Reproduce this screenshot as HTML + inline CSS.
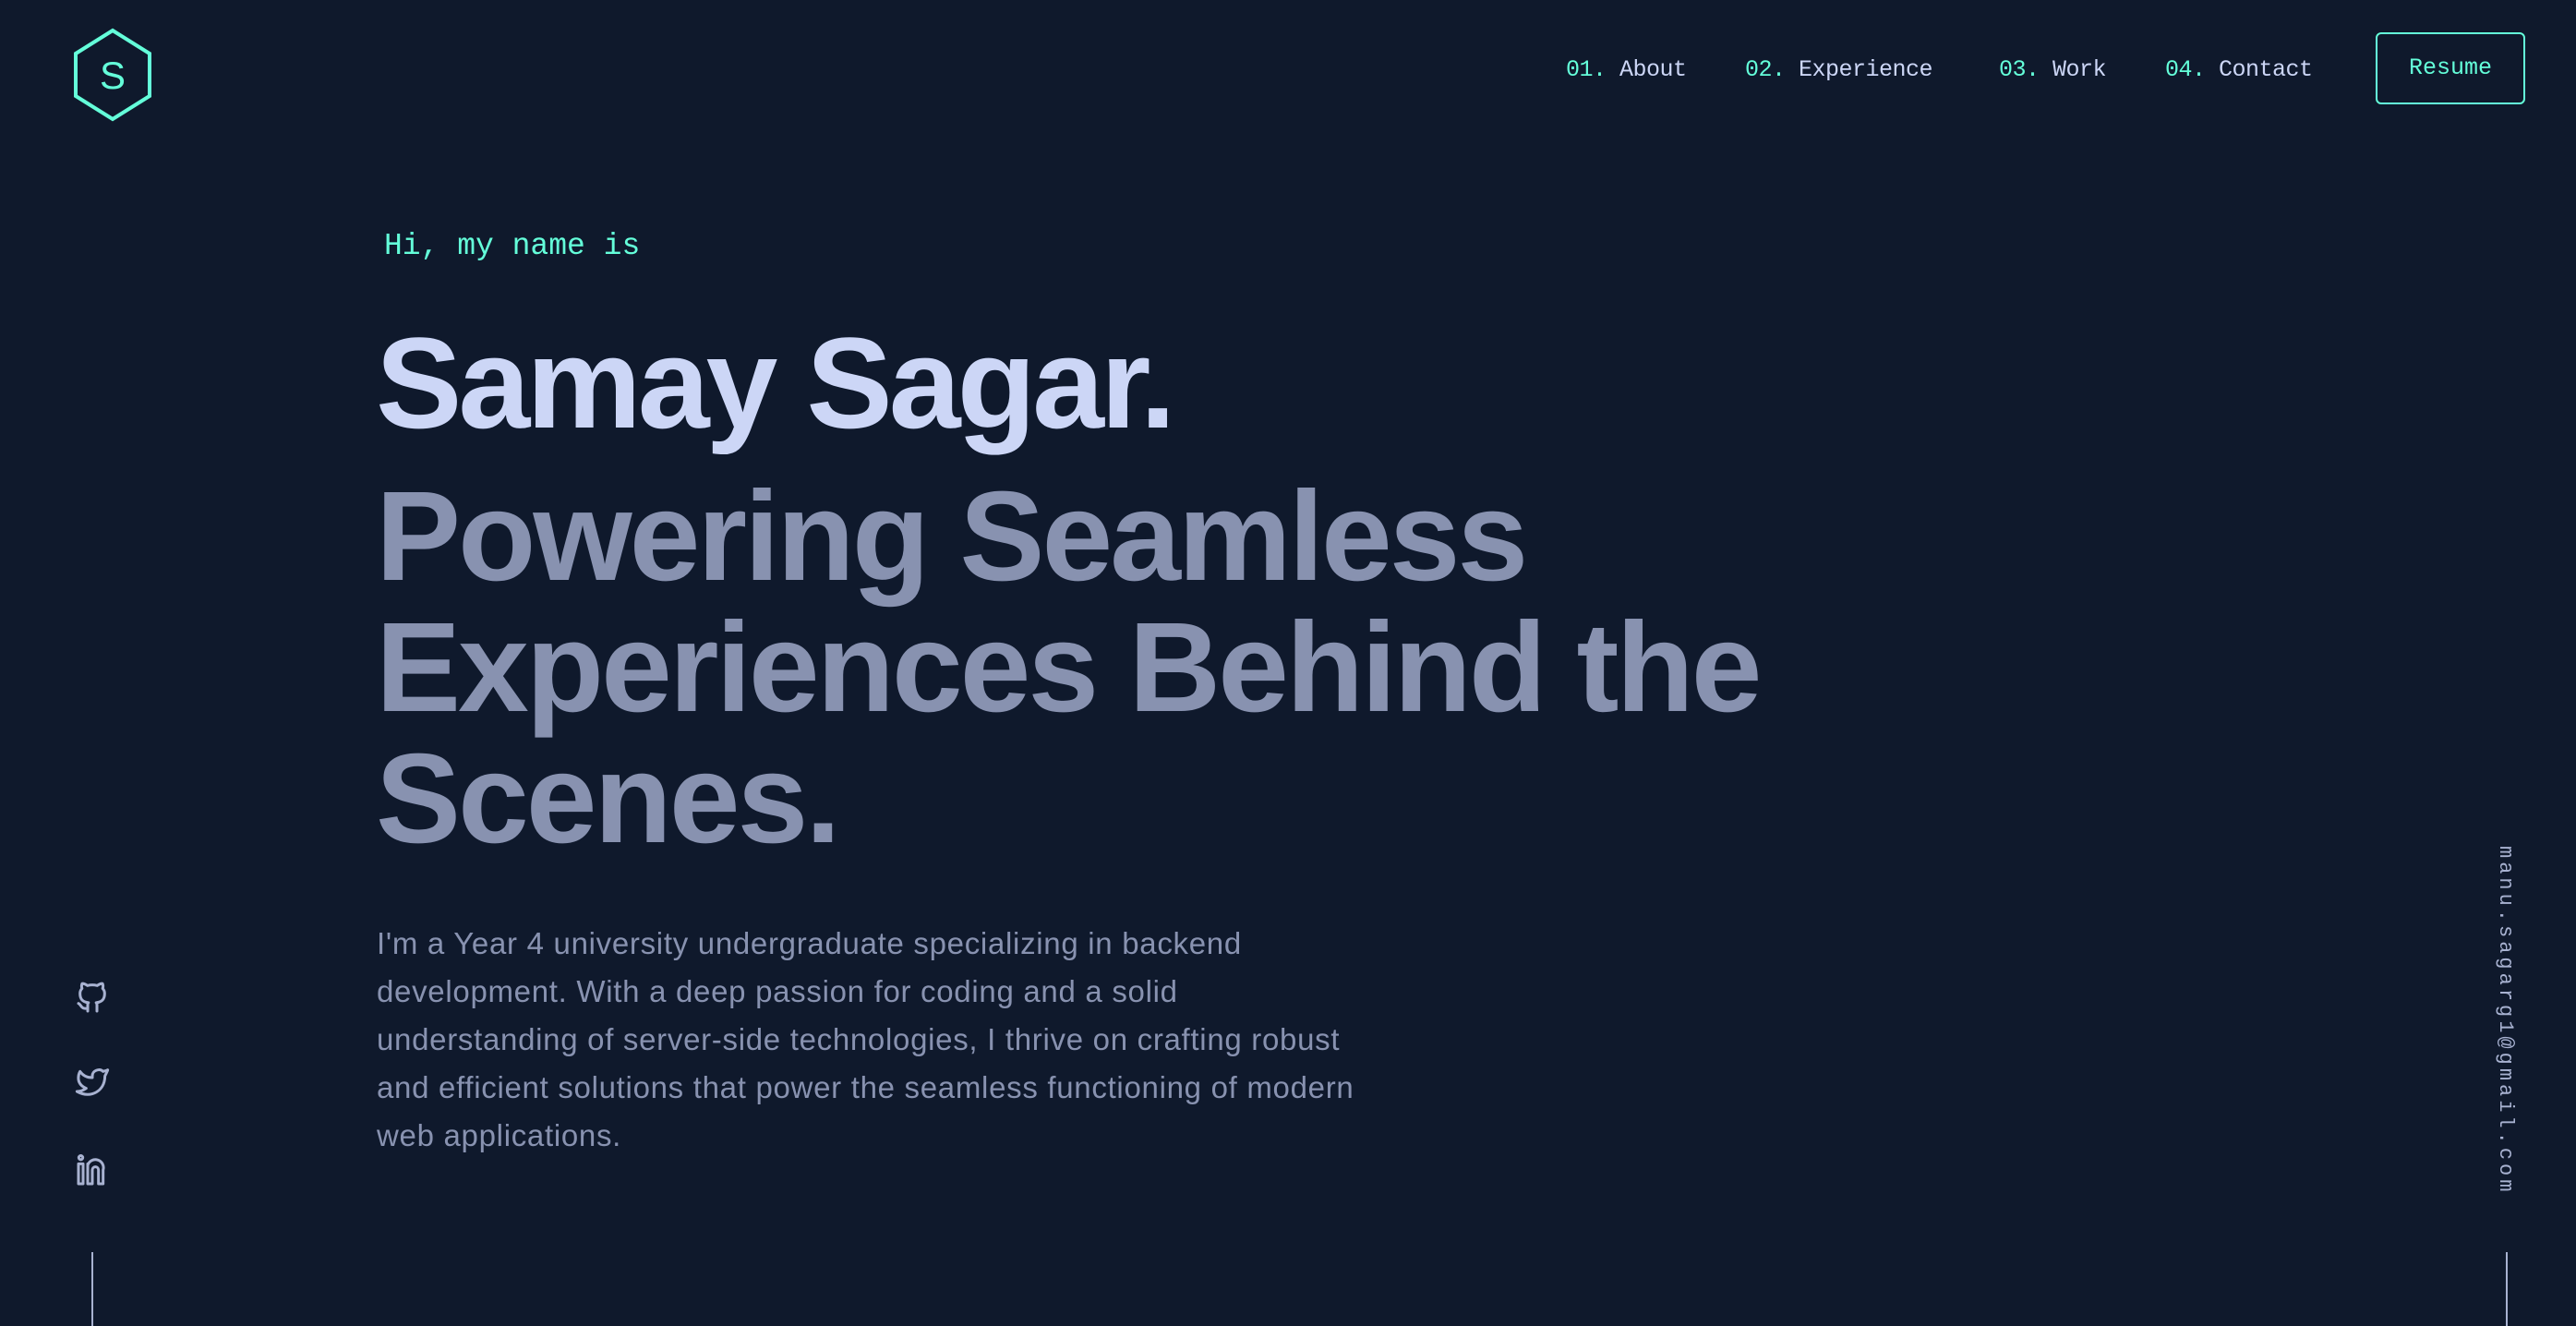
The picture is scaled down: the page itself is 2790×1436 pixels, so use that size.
<!DOCTYPE html>
<html><head><meta charset="utf-8"><style>
html,body{margin:0;padding:0;background:#0f192c;width:2790px;height:1436px;overflow:hidden;position:relative;font-family:"Liberation Sans",sans-serif}
.a{position:absolute;white-space:nowrap}
.mono{font-family:"Liberation Mono",monospace}
.nav{font-size:25px;line-height:30px;top:61px;color:#ccd6f6;letter-spacing:-0.5px}
.nav b{font-weight:normal;color:#64ffda}
</style></head><body>
<svg class="a" style="left:76px;top:30px" width="92" height="102" viewBox="0 0 92 102">
<polygon points="46,3 86,28 86,74 46,99 6,74 6,28" fill="none" stroke="#64ffda" stroke-width="4"/>
<text x="46" y="66" text-anchor="middle" font-family="Liberation Sans,sans-serif" font-size="42" fill="#64ffda">S</text>
</svg>
<div class="a mono nav" style="left:1696px"><b>01.</b> About</div>
<div class="a mono nav" style="left:1890px"><b>02.</b> Experience</div>
<div class="a mono nav" style="left:2165px"><b>03.</b> Work</div>
<div class="a mono nav" style="left:2345px"><b>04.</b> Contact</div>
<div class="a mono" style="left:2573px;top:35px;width:158px;height:74px;border:2px solid #64ffda;border-radius:6px;color:#64ffda;font-size:25px;line-height:74px;text-align:center">Resume</div>

<div class="a mono" style="left:416px;top:247px;font-size:33px;line-height:40px;color:#64ffda">Hi, my name is</div>
<div class="a" style="left:407px;top:342px;font-size:140px;line-height:145px;font-weight:bold;color:#ccd6f6;letter-spacing:-4px">Samay Sagar.</div>
<div class="a" style="left:407px;top:510px;font-size:138px;line-height:142px;font-weight:bold;color:#8892b0;letter-spacing:-3px">Powering Seamless<br>Experiences Behind the<br>Scenes.</div>
<div class="a" style="left:408px;top:996px;font-size:33px;line-height:52px;color:#8892b0;letter-spacing:0.7px">I'm a Year 4 university undergraduate specializing in backend<br>development. With a deep passion for coding and a solid<br>understanding of server-side technologies, I thrive on crafting robust<br>and efficient solutions that power the seamless functioning of modern<br>web applications.</div>

<svg class="a" style="left:80px;top:1060px" width="40" height="40" viewBox="0 0 24 24" fill="none" stroke="#a8b2d1" stroke-width="1.8" stroke-linecap="round" stroke-linejoin="round"><path d="M9 19c-4.3 1.4-4.3-2.5-6-3m12 5v-3.5c0-1 .1-1.4-.5-2 2.8-.3 5.5-1.4 5.5-6a4.6 4.6 0 0 0-1.3-3.2 4.2 4.2 0 0 0-.1-3.2s-1.1-.3-3.5 1.3a12.3 12.3 0 0 0-6.2 0C6.5 2.8 5.4 3.1 5.4 3.1a4.2 4.2 0 0 0-.1 3.2A4.6 4.6 0 0 0 4 9.5c0 4.6 2.7 5.7 5.5 6-.6.6-.6 1.2-.5 2V21"/></svg>
<svg class="a" style="left:80px;top:1152px" width="40" height="40" viewBox="0 0 24 24" fill="none" stroke="#a8b2d1" stroke-width="1.8" stroke-linecap="round" stroke-linejoin="round"><path d="M22 4.01c-1 .49-1.98.689-3 .99-1.121-1.265-2.783-1.335-4.38-.737S11.977 6.323 12 8v1c-3.245.083-6.135-1.395-8-4 0 0-4.182 7.433 4 11-1.872 1.247-3.739 2.088-6 2 3.308 1.803 6.913 2.423 10.034 1.517 3.580-1.04 6.522-3.723 7.651-7.742a13.840 13.840 0 0 0 .497-3.753C20.180 7.773 21.692 5.250 22 4.009z"/></svg>
<svg class="a" style="left:80px;top:1247px" width="40" height="40" viewBox="0 0 24 24" fill="none" stroke="#a8b2d1" stroke-width="1.8" stroke-linecap="round" stroke-linejoin="round"><circle cx="4.5" cy="4" r="1.3"/><path d="M3 8h3v13H3zM9 21V8h0v1a5 5 0 0 1 10 3v9h-3v-9a2 2 0 0 0-4 0v9z"/></svg>
<div class="a" style="left:99px;top:1356px;width:2px;height:80px;background:#a8b2d1"></div>

<div class="a mono" style="left:2700px;top:916px;writing-mode:vertical-rl;font-size:22px;letter-spacing:4px;color:#a8b2d1;line-height:26px">manu.sagarg1@gmail.com</div>
<div class="a" style="left:2714px;top:1356px;width:2px;height:80px;background:#a8b2d1"></div>
</body></html>
